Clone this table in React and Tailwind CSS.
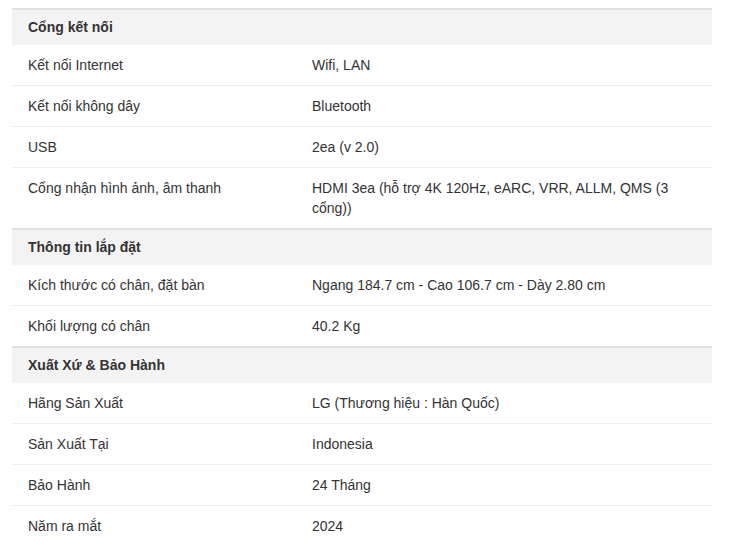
const sections = [
  {
    title: "Cổng kết nối",
    rows: [
      ["Kết nối Internet", "Wifi, LAN"],
      ["Kết nối không dây", "Bluetooth"],
      ["USB", "2ea (v 2.0)"],
      ["Cổng nhận hình ảnh, âm thanh", "HDMI 3ea (hỗ trợ 4K 120Hz, eARC, VRR, ALLM, QMS (3 cổng))"],
    ],
  },
  {
    title: "Thông tin lắp đặt",
    rows: [
      ["Kích thước có chân, đặt bàn", "Ngang 184.7 cm - Cao 106.7 cm - Dày 2.80 cm"],
      ["Khối lượng có chân", "40.2 Kg"],
    ],
  },
  {
    title: "Xuất Xứ & Bảo Hành",
    rows: [
      ["Hãng Sản Xuất", "LG (Thương hiệu : Hàn Quốc)"],
      ["Sản Xuất Tại", "Indonesia"],
      ["Bảo Hành", "24 Tháng"],
      ["Năm ra mắt", "2024"],
    ],
  },
];

export default function App() {
  return (
    <div className="min-h-screen bg-white pt-[8px] pl-3 font-['Liberation_Sans',Arial,sans-serif] text-[14px] text-[#333]">
      <div className="w-[700px]">
        {sections.map((s) => (
          <div key={s.title}>
            <div className="border-t-2 border-[#e0e0e0] bg-[#f3f3f3] px-4 py-[8px] font-bold leading-[19px]">
              {s.title}
            </div>
            {s.rows.map(([k, v], i) => (
              <div
                key={k}
                className={`flex leading-[20px] ${i < s.rows.length - 1 ? "border-b border-[#eeeeee]" : ""} py-[10px]`}
              >
                <div className="w-[284px] shrink-0 px-4">{k}</div>
                <div className="flex-1 px-4">{v}</div>
              </div>
            ))}
          </div>
        ))}
      </div>
    </div>
  );
}
